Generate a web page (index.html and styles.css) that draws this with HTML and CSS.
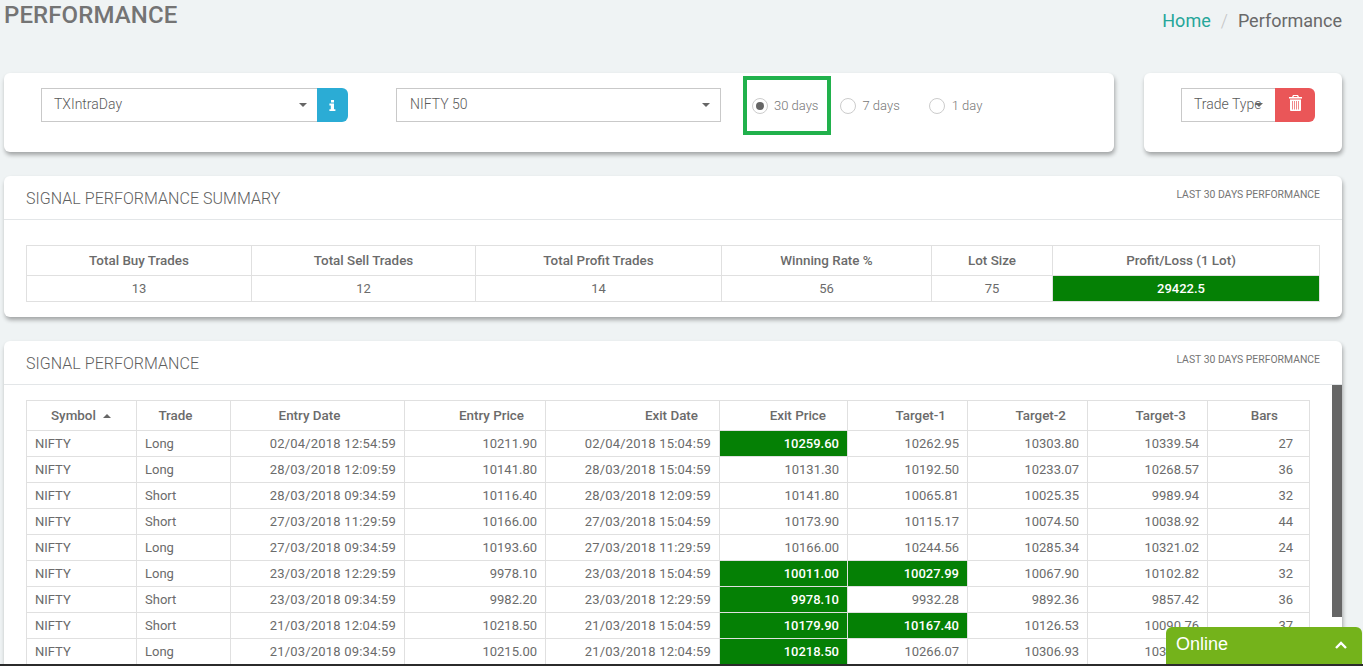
FILE: index.html
```html
<!DOCTYPE html>
<html lang="en">
<head>
<meta charset="utf-8">
<title>Performance</title>
<link rel="stylesheet" href="styles.css">
</head>
<body>
<div class="page">
  <header class="page-head">
    <h1 class="page-title">PERFORMANCE</h1>
    <nav class="crumbs"><a class="crumb-home">Home</a><span class="crumb-sep">/</span><span class="crumb-now">Performance</span></nav>
  </header>

  <section class="filters">
    <div class="card filter-main">
      <div class="group group-strategy">
        <div class="select select-strategy">TXIntraDay<i class="caret"></i></div>
        <button class="addon addon-info" aria-label="Info">
          <svg width="7" height="11" viewBox="0 0 7 11"><path fill="#fff" d="M2 0h3v2.4H2zM.4 3.6H5v5.6h1.4V11H.4V9.2h1.4V5.4H.4z"/></svg>
        </button>
      </div>
      <div class="select select-index">NIFTY 50<i class="caret"></i></div>
      <div class="radios">
        <div class="marked">
          <label class="radio"><i class="dot on"></i>30 days</label>
          <span class="highlight"></span>
        </div>
        <label class="radio radio-7"><i class="dot"></i>7 days</label>
        <label class="radio radio-1"><i class="dot"></i>1 day</label>
      </div>
    </div>
    <div class="card filter-side">
      <div class="group">
        <div class="select select-type">Trade Type<i class="caret"></i></div>
        <button class="addon addon-trash" aria-label="Clear">
          <svg width="13" height="16" viewBox="0 0 13 16"><path fill="#fff" fill-rule="evenodd" d="M4 0h5l1 2h3v1.5H0V2h3zM4.9 1 4.5 2h4l-.4-1zM1 4.5h11V15a1 1 0 0 1-1 1H2a1 1 0 0 1-1-1zM3 6v8.5h.7V6zm2 0v8.5h.7V6zm2 0v8.5h.7V6zm2 0v8.5h.7V6z"/></svg>
        </button>
      </div>
    </div>
  </section>

  <section class="card panel panel-summary">
    <div class="panel-head">
      <h2 class="panel-title">SIGNAL PERFORMANCE SUMMARY</h2>
      <span class="panel-note">LAST 30 DAYS PERFORMANCE</span>
    </div>
    <div class="panel-body">
      <table class="grid summary">
        <colgroup><col class="s1"><col class="s2"><col class="s3"><col class="s4"><col class="s5"><col class="s6"></colgroup>
        <thead><tr><th>Total Buy Trades</th><th>Total Sell Trades</th><th>Total Profit Trades</th><th>Winning Rate %</th><th>Lot Size</th><th class="last">Profit/Loss (1 Lot)</th></tr></thead>
        <tbody><tr><td>13</td><td>12</td><td>14</td><td>56</td><td>75</td><td class="win last">29422.5</td></tr></tbody>
      </table>
    </div>
  </section>

  <section class="card panel panel-trades">
    <div class="panel-head">
      <h2 class="panel-title">SIGNAL PERFORMANCE</h2>
      <span class="panel-note">LAST 30 DAYS PERFORMANCE</span>
    </div>
    <div class="panel-body trades-body">
      <table class="grid trades">
        <colgroup><col class="c1"><col class="c2"><col class="c3"><col class="c4"><col class="c5"><col class="c6"><col class="c7"><col class="c8"><col class="c9"><col class="c10"></colgroup>
        <thead>
          <tr>
            <th class="th-symbol">Symbol<i class="sort"></i></th><th class="th-shift">Trade</th><th class="th-shift">Entry Date</th><th class="th-right">Entry Price</th><th class="th-right">Exit Date</th><th class="th-right">Exit Price</th><th class="th-right">Target-1</th><th class="th-right">Target-2</th><th class="th-right">Target-3</th><th class="th-bars">Bars</th>
          </tr>
        </thead>
        <tbody>
          <tr><td>NIFTY</td><td>Long</td><td>02/04/2018 12:54:59</td><td>10211.90</td><td>02/04/2018 15:04:59</td><td class="win">10259.60</td><td>10262.95</td><td>10303.80</td><td>10339.54</td><td class="bars">27</td></tr>
          <tr><td>NIFTY</td><td>Long</td><td>28/03/2018 12:09:59</td><td>10141.80</td><td>28/03/2018 15:04:59</td><td>10131.30</td><td>10192.50</td><td>10233.07</td><td>10268.57</td><td class="bars">36</td></tr>
          <tr><td>NIFTY</td><td>Short</td><td>28/03/2018 09:34:59</td><td>10116.40</td><td>28/03/2018 12:09:59</td><td>10141.80</td><td>10065.81</td><td>10025.35</td><td>9989.94</td><td class="bars">32</td></tr>
          <tr><td>NIFTY</td><td>Short</td><td>27/03/2018 11:29:59</td><td>10166.00</td><td>27/03/2018 15:04:59</td><td>10173.90</td><td>10115.17</td><td>10074.50</td><td>10038.92</td><td class="bars">44</td></tr>
          <tr><td>NIFTY</td><td>Long</td><td>27/03/2018 09:34:59</td><td>10193.60</td><td>27/03/2018 11:29:59</td><td>10166.00</td><td>10244.56</td><td>10285.34</td><td>10321.02</td><td class="bars">24</td></tr>
          <tr><td>NIFTY</td><td>Long</td><td>23/03/2018 12:29:59</td><td>9978.10</td><td>23/03/2018 15:04:59</td><td class="win">10011.00</td><td class="win">10027.99</td><td>10067.90</td><td>10102.82</td><td class="bars">32</td></tr>
          <tr><td>NIFTY</td><td>Short</td><td>23/03/2018 09:34:59</td><td>9982.20</td><td>23/03/2018 12:29:59</td><td class="win">9978.10</td><td>9932.28</td><td>9892.36</td><td>9857.42</td><td class="bars">36</td></tr>
          <tr><td>NIFTY</td><td>Short</td><td>21/03/2018 12:04:59</td><td>10218.50</td><td>21/03/2018 15:04:59</td><td class="win">10179.90</td><td class="win">10167.40</td><td>10126.53</td><td>10090.76</td><td class="bars">37</td></tr>
          <tr><td>NIFTY</td><td>Long</td><td>21/03/2018 09:34:59</td><td>10215.00</td><td>21/03/2018 12:04:59</td><td class="win">10218.50</td><td>10266.07</td><td>10306.93</td><td>10342.67</td><td class="bars">28</td></tr>
        </tbody>
      </table>
      <span class="scroll-thumb"></span>
    </div>
  </section>
</div>

<aside class="chat">
  <span class="chat-label">Online</span>
  <svg class="chat-chevron" width="12" height="8" viewBox="0 0 12 8"><path fill="none" stroke="#fff" stroke-width="2.4" d="M1 7l5-5 5 5"/></svg>
</aside>
<div class="edge"></div>
</body>
</html>
```
FILE: styles.css
```css
* { box-sizing: border-box; }
html, body { margin: 0; height: 666px; overflow: hidden; }
body { background: #eff3f4; color: #6b6b6b; font-family: Roboto, "Liberation Sans", sans-serif; font-size: 13px; }

.page { height: 666px; overflow: hidden; padding: 0 21px 0 4px; }
.page-head { display: flex; justify-content: space-between; align-items: flex-start; height: 73px; }
.page-title { margin: 0; font-size: 24px; font-weight: 500; letter-spacing: .1px; line-height: 30px; color: #747474; }
.crumbs { font-size: 18px; font-weight: 400; line-height: 24px; padding-top: 9px; color: #696969; display: flex; }
.crumb-home { color: #26a69a; }
.crumb-sep { color: #c4c4c4; font-weight: 300; margin: 0 10px; }

.card { background: #fff; border-radius: 6px; box-shadow: 1px 3px 4px rgba(0, 0, 0, .32); }

.filters { display: flex; justify-content: space-between; height: 79px; margin-bottom: 24px; }
.filter-main { width: 1110px; display: flex; align-items: flex-start; padding: 15px 0 0 37px; }
.filter-side { width: 198px; padding: 15px 27px 0 37px; }
.group { display: flex; }
.select { position: relative; height: 34px; border: 1px solid #c9c9c9; background: #fff; font-size: 14px; font-weight: 300; line-height: 31px; padding-left: 12px; color: #5a5a5a; white-space: nowrap; }
.select-strategy { width: 276px; border-right: 0; }
.select-index { width: 325px; margin-left: 48px; padding-left: 13px; }
.select-type { width: 94px; border-right: 0; }
.caret { position: absolute; right: 10px; top: 14px; width: 0; height: 0; border: 4px solid transparent; border-top: 4px solid #666; border-bottom: 0; }
.select-type .caret { right: 12px; }
.addon { display: flex; align-items: center; justify-content: center; height: 34px; padding: 0; border: 0; border-radius: 0 6px 6px 0; }
.addon-info { width: 31px; background: #2bacd5; }
.addon-trash { width: 40px; background: #ea5658; }
.addon-trash svg { margin-top: -5px; }

.radios { display: flex; align-items: center; height: 34px; padding-top: 2px; font-size: 13px; font-weight: 300; color: #777; }
.marked { position: relative; margin-left: 31px; }
.highlight { position: absolute; left: -9px; top: -22px; width: 88px; height: 59px; border: 4px solid #21b14c; }
.radio { display: flex; align-items: center; line-height: 16px; }
.dot { display: flex; align-items: center; justify-content: center; width: 16px; height: 16px; margin-right: 6px; border: 1px solid #ccc; border-radius: 50%; background: #fff; }
.dot.on::after { content: ""; width: 8px; height: 8px; border-radius: 50%; background: #666; }
.radio-7 { margin-left: 22px; }
.radio-7 .dot { margin-right: 6px; }
.radio-1 { margin-left: 29px; }
.radio-1 .dot { margin-right: 7px; }

.panel { margin-bottom: 24px; }
.panel-head { position: relative; display: flex; justify-content: space-between; height: 44px; padding: 0 22px; border-bottom: 1px solid #e3e6e8; }
.panel-title { margin: 0; font-size: 16px; font-weight: 300; letter-spacing: .03px; line-height: 45px; color: #5f5f5f; }
.panel-note { font-size: 10.4px; font-weight: 400; line-height: 12px; padding-top: 13px; color: #757575; }
.panel-summary { height: 141px; }
.panel-summary .panel-body { padding: 25px 22px 0; }
.panel-trades { height: 340px; }
.trades-body { position: relative; padding: 15px 0 0 22px; height: 296px; overflow: hidden; }

.grid { border-collapse: collapse; table-layout: fixed; }
.grid th, .grid td { border: 1px solid #e0e0e0; }
.grid th { font-size: 13.4px; font-weight: 500; text-align: center; color: #6b6b6b; height: 30px; padding: 0 8px; }
.summary { width: 1293px; }
.summary td { height: 26px; text-align: center; font-size: 13px; padding: 0 8px; color: #6b6b6b; font-weight: 400; }
.s1 { width: 225px; } .s2 { width: 224px; } .s3 { width: 246px; } .s4 { width: 210px; } .s5 { width: 121px; } .s6 { width: 267px; }
.grid td.win { background: #058005; color: #fff; font-weight: 500; }
.grid .last, .grid td.last { padding-right: 18px; }

.trades { width: 1283px; }
.c1 { width: 110px; } .c2 { width: 94px; } .c3 { width: 174px; } .c4 { width: 141px; } .c5 { width: 174px; }
.c6 { width: 128px; } .c7, .c8, .c9 { width: 120px; } .c10 { width: 102px; }
.trades td { height: 26px; padding: 0 8px; text-align: right; font-size: 13px; color: #6b6b6b; white-space: nowrap; }
.trades td:nth-child(-n+2) { text-align: left; }
.trades td:nth-child(3), .trades td:nth-child(5) { letter-spacing: .2px; }
.trades td.bars { padding-right: 16px; }
.trades th.th-right { text-align: right; padding-right: 21px; }
.trades th.th-bars { text-align: right; padding-right: 31px; }
.trades th.th-shift { padding-right: 24px; }
.trades th.th-symbol { padding-left: 24px; padding-right: 0; text-align: left; }
.sort { display: inline-block; margin-left: 7px; vertical-align: 2px; width: 0; height: 0; border: 4px solid transparent; border-bottom: 4px solid #666; border-top: 0; }
.scroll-thumb { position: absolute; right: 0; top: 0; width: 10px; height: 232px; background: #666; }

.chat { position: fixed; left: 1166px; top: 627px; width: 196px; height: 37px; display: flex; align-items: center; justify-content: space-between; padding: 0 15px 2px 10px; background: #74b31b; border-radius: 6px 6px 0 0; }
.chat-label { font-family: "Liberation Sans", Arial, sans-serif; font-size: 18px; color: #fff; }
.edge { position: fixed; left: 0; right: 0; bottom: 0; height: 2px; background: #2b2b2b; }
```
